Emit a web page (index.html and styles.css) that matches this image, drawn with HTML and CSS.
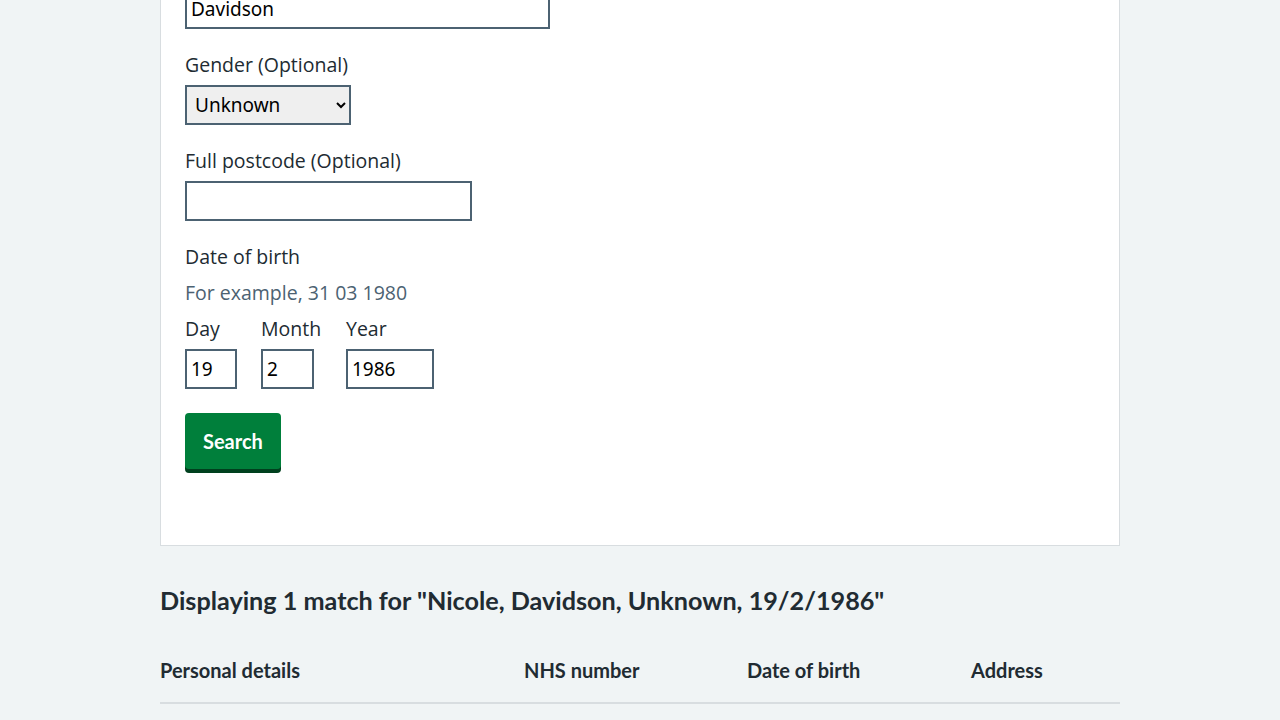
FILE: index.html
```html
<!DOCTYPE html>
<html lang="en">
<head>
<meta charset="utf-8">
<title>Patient search</title>
<link rel="stylesheet" href="styles.css">
</head>
<body>
<main class="page">
  <div class="card">
    <div class="group">
      <input class="input input-name" type="text" value="Davidson">
    </div>
    <div class="group">
      <label class="label">Gender (Optional)</label>
      <select class="select"><option>Unknown</option></select>
    </div>
    <div class="group">
      <label class="label">Full postcode (Optional)</label>
      <input class="input input-postcode" type="text" value="">
    </div>
    <fieldset class="group fieldset">
      <legend class="label legend">Date of birth</legend>
      <div class="hint">For example, 31 03 1980</div>
      <div class="date">
        <div class="date-item">
          <label class="label">Day</label>
          <input class="input input-day" type="text" value="19">
        </div>
        <div class="date-item date-item-month">
          <label class="label">Month</label>
          <input class="input input-month" type="text" value="2">
        </div>
        <div class="date-item">
          <label class="label">Year</label>
          <input class="input input-year" type="text" value="1986">
        </div>
      </div>
    </fieldset>
    <button class="button" type="button">Search</button>
  </div>

  <h2 class="heading">Displaying 1 match for "Nicole, Davidson, Unknown, 19/2/1986"</h2>

  <table class="table">
    <colgroup>
      <col class="col-1"><col class="col-2"><col class="col-3"><col class="col-4">
    </colgroup>
    <thead>
      <tr>
        <th>Personal details</th>
        <th>NHS number</th>
        <th>Date of birth</th>
        <th>Address</th>
      </tr>
    </thead>
  </table>
</main>
</body>
</html>
```

FILE: styles.css
```css
* { box-sizing: border-box; }

html, body {
  margin: 0;
  padding: 0;
  background: #f0f4f5;
  color: #212b32;
  font-family: "Open Sans", "Noto Sans", sans-serif;
}

.page {
  width: 960px;
  margin: 0 auto;
}

.card {
  margin-top: -52px;
  background: #ffffff;
  border: 1px solid #d8dde0;
  padding: 40px 24px 76px;
}

.group {
  margin: 0 0 24px;
}

.fieldset {
  border: 0;
  padding: 0;
  min-width: 0;
}

.label {
  display: block;
  font-size: 19.5px;
  line-height: 24px;
  padding: 0 0 4px;
  margin: 0 0 4px;
  color: #212b32;
}

.legend {
  margin-bottom: 8px;
}

.hint {
  font-size: 19.5px;
  line-height: 24px;
  padding-bottom: 4px;
  color: #4c6272;
  margin-bottom: 8px;
}

.input {
  display: block;
  height: 40px;
  border: 2px solid #4c6272;
  border-radius: 0;
  padding: 4px;
  font-family: "Noto Sans", "Open Sans", sans-serif;
  font-size: 19px;
  color: #000;
  background: #fff;
  margin: 0;
}

.input-name { width: 365px; }
.input-postcode { width: 287px; }
.input-day { width: 52px; }
.input-month { width: 53px; }
.input-year { width: 88px; }

.select {
  display: block;
  width: 166px;
  height: 40px;
  border: 2px solid #4c6272;
  border-radius: 0;
  background-color: #efefef;
  padding: 0 4px;
  font-family: "Noto Sans", "Open Sans", sans-serif;
  font-size: 19px;
  color: #000;
  margin: 0;
}

.date {
  display: flex;
}

.date-item {
  margin-right: 24px;
}

.date-item-month {
  min-width: 61px;
}

.button {
  display: block;
  margin: 0;
  padding: 12px 16px;
  border: 2px solid transparent;
  border-radius: 4px;
  background: #007f3b;
  box-shadow: 0 4px 0 #00401e;
  color: #fff;
  font-family: "Lato", "Open Sans", sans-serif;
  font-weight: 700;
  font-size: 20px;
  line-height: 28px;
  cursor: pointer;
}

.heading {
  font-family: "Lato", "Open Sans", sans-serif;
  font-weight: 700;
  font-size: 25.2px;
  line-height: 32px;
  margin: 38px 0 24px;
  color: #212b32;
}

.table {
  width: 960px;
  border-collapse: collapse;
  table-layout: fixed;
}

.col-1 { width: 364px; }
.col-2 { width: 223px; }
.col-3 { width: 224px; }
.col-4 { width: 149px; }

.table th {
  text-align: left;
  font-family: "Lato", "Open Sans", sans-serif;
  font-weight: 700;
  font-size: 20px;
  line-height: 28px;
  padding: 16px 0 18px;
  border-bottom: 2px solid #d8dde0;
  color: #212b32;
}
```
